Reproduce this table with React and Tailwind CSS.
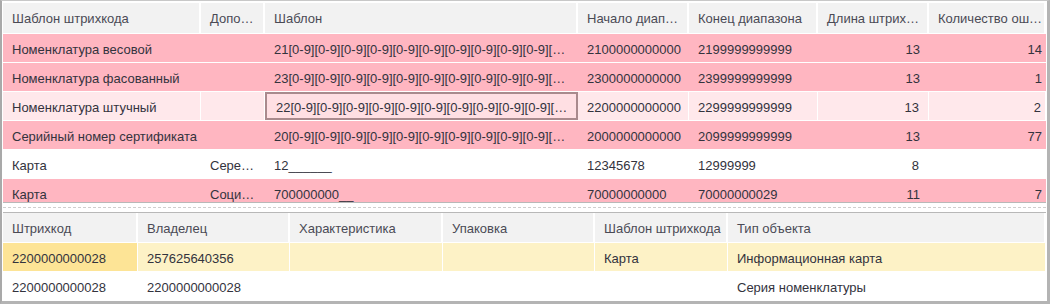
import React from 'react';

const font = { fontFamily: '"Liberation Sans", Arial, sans-serif' };

const topCols = [
  { w: 'w-[198px]', title: 'Шаблон штрихкода' },
  { w: 'w-[64px]', title: 'Допо…' },
  { w: 'w-[313px]', title: 'Шаблон' },
  { w: 'w-[111px]', title: 'Начало диап…' },
  { w: 'w-[129px]', title: 'Конец диапазона' },
  { w: 'w-[111px]', title: 'Длина штрих…', right: 'pr-[9px]' },
  { w: 'w-[117px]', title: 'Количество ош…', right: 'pr-[4px]' },
];

const tpl = (p) => p + '[0-9]'.repeat(10) + '[…';

const topRows = [
  { kind: 'pink', cells: ['Номенклатура весовой', '', tpl('21'), '2100000000000', '2199999999999', '13', '14'] },
  { kind: 'pink', cells: ['Номенклатура фасованный', '', tpl('23'), '2300000000000', '2399999999999', '13', '1'] },
  { kind: 'current', cells: ['Номенклатура штучный', '', tpl('22'), '2200000000000', '2299999999999', '13', '2'] },
  { kind: 'pink', cells: ['Серийный номер сертификата', '', tpl('20'), '2000000000000', '2099999999999', '13', '77'] },
  { kind: 'white', cells: ['Карта', 'Сере…', '12______', '12345678', '12999999', '8', ''] },
  { kind: 'pink', cells: ['Карта', 'Соци…', '700000000__', '70000000000', '70000000029', '11', '7'] },
];

const bottomCols = [
  { w: 'w-[135px]', title: 'Штрихкод' },
  { w: 'w-[152px]', title: 'Владелец' },
  { w: 'w-[153px]', title: 'Характеристика' },
  { w: 'w-[152px]', title: 'Упаковка' },
  { w: 'w-[133px]', title: 'Шаблон штрихкода' },
  { w: 'w-[318px]', title: 'Тип объекта' },
];

const bottomRows = [
  { kind: 'yellow', cells: ['2200000000028', '257625640356', '', '', 'Карта', 'Информационная карта'] },
  { kind: 'white', cells: ['2200000000028', '2200000000028', '', '', '', 'Серия номенклатуры'] },
];

function HeaderRow({ cols, h }) {
  return (
    <div className={`flex ${h} border-b border-white bg-[#f2f2f2] text-[#4a4a55]`}>
      {cols.map((c, i) => (
        <div
          key={i}
          className={`${c.w} shrink-0 flex items-center pt-[2px] pl-[9px] border-r-2 border-white truncate whitespace-nowrap`}
        >
          {c.title}
        </div>
      ))}
    </div>
  );
}

export default function App() {
  return (
    <div
      className="w-[1050px] h-[304px] bg-white border-l-2 border-r-[3px] border-b-[3px] border-t border-l-[#a9a9a9] border-r-[#b4b4b4] border-b-[#b4b4b4] border-t-[#c8c8c8] px-[1px] pt-[2px] text-[13px] overflow-hidden"
      style={font}
    >
      {/* Top: barcode templates */}
      <div className="h-[200px] border-b border-[#b8b8b8] overflow-hidden">
        <HeaderRow cols={topCols} h="h-[31px]" />
        {topRows.map((r, ri) => {
          const bg = r.kind === 'pink' ? 'bg-[#ffb6c1]' : r.kind === 'current' ? 'bg-[#ffe8eb]' : 'bg-white';
          const vline = r.kind === 'pink' ? '' : 'border-r border-white';
          return (
            <div key={ri} className={`flex h-[29px] border-b border-white ${bg} text-[#33333d]`}>
              {r.cells.map((v, ci) => {
                const c = topCols[ci];
                const isNum = ci >= 5;
                const focus = r.kind === 'current' && ci === 2;
                return (
                  <div
                    key={ci}
                    className={`${c.w} shrink-0 flex items-center pt-[3px] whitespace-nowrap overflow-hidden ${
                      isNum ? `justify-end ${c.right}` : 'pl-[9px]'
                    } ${focus ? 'border-2 border-[#a98a8d] bg-[#ffdfe3] pl-[7px] pt-[1px]' : vline}`}
                  >
                    {v}
                  </div>
                );
              })}
            </div>
          );
        })}
      </div>

      {/* Splitter */}
      <div className="h-[9px] pt-[4px]">
        <div className="border-t border-dashed border-[#cfcfcf]" />
      </div>

      {/* Bottom: barcodes */}
      <div className="border-t border-[#b8b8b8]">
        <HeaderRow cols={bottomCols} h="h-[30px]" />
        {bottomRows.map((r, ri) => (
          <div
            key={ri}
            className={`flex h-[29px] border-b border-white ${r.kind === 'yellow' ? 'bg-[#fdf2c6]' : 'bg-white'} text-[#33333d]`}
          >
            {r.cells.map((v, ci) => (
              <div
                key={ci}
                className={`${bottomCols[ci].w} shrink-0 flex items-center pt-[3px] pl-[9px] border-r border-white whitespace-nowrap overflow-hidden ${
                  r.kind === 'yellow' && ci === 0 ? 'bg-[#fde496]' : ''
                }`}
              >
                {v}
              </div>
            ))}
          </div>
        ))}
      </div>
    </div>
  );
}
